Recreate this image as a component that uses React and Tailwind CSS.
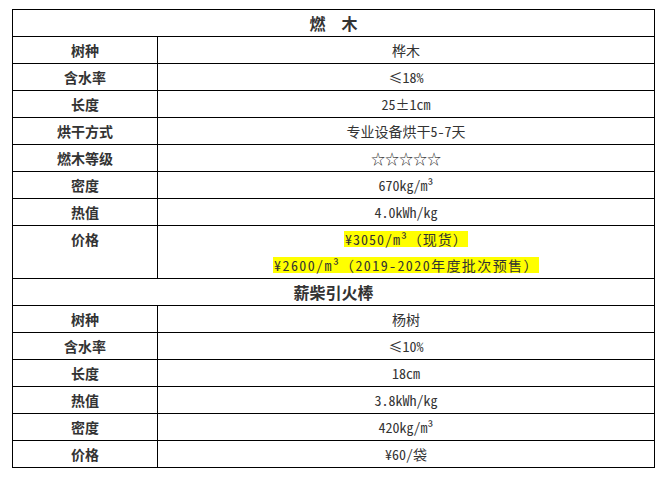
import React from "react";

const woodRows = [
  ["树种", "桦木"],
  ["含水率", "≤18%"],
  ["长度", "25±1cm"],
  ["烘干方式", "专业设备烘干5-7天"],
  ["燃木等级", "☆☆☆☆☆"],
  ["密度", "670kg/m³"],
  ["热值", "4.0kWh/kg"],
];

const kindlingRows = [
  ["树种", "杨树"],
  ["含水率", "≤10%"],
  ["长度", "18cm"],
  ["热值", "3.8kWh/kg"],
  ["密度", "420kg/m³"],
  ["价格", "¥60/袋"],
];

const font = { fontFamily: '"Noto Sans Mono CJK SC", "Noto Sans CJK SC", monospace' };

const Row = ({ label, value }) => (
  <tr className="h-[27px]">
    <td className="border border-black text-center font-bold text-[14px] leading-[26px] p-0">{label}</td>
    <td className="border border-black text-center text-[14px] leading-[26px] p-0">{value}</td>
  </tr>
);

const SectionHead = ({ children }) => (
  <tr className="h-[27px]">
    <td colSpan={2} className="border border-black text-center font-bold text-[16px] leading-[26px] p-0 whitespace-pre">
      {children}
    </td>
  </tr>
);

export default function App() {
  return (
    <div className="w-[671px] h-[477px] bg-white pt-[9px] pl-[12px]" style={font}>
      <table className="w-[643px] border-collapse text-[#333] table-fixed">
        <colgroup>
          <col className="w-[145px]" />
          <col />
        </colgroup>
        <tbody>
          <SectionHead>燃  木</SectionHead>
          {woodRows.map(([l, v]) => (
            <Row key={l} label={l} value={v} />
          ))}
          <tr className="h-[53px]">
            <td className="border border-black text-center align-top font-bold text-[14px] leading-[26px] p-0">价格</td>
            <td className="border border-black text-center text-[14px] p-0">
              <div className="h-[26px] flex items-center justify-center">
                <span className="inline-block bg-[#ffff00] leading-[16px] tracking-[1px] pl-[1px]">¥3050/m³（现货）</span>
              </div>
              <div className="h-[26px] flex items-center justify-center">
                <span className="inline-block bg-[#ffff00] leading-[16px] tracking-[1.4px] pl-[1px]">¥2600/m³（2019-2020年度批次预售）</span>
              </div>
            </td>
          </tr>
          <SectionHead>薪柴引火棒</SectionHead>
          {kindlingRows.map(([l, v]) => (
            <Row key={l} label={l} value={v} />
          ))}
        </tbody>
      </table>
    </div>
  );
}
